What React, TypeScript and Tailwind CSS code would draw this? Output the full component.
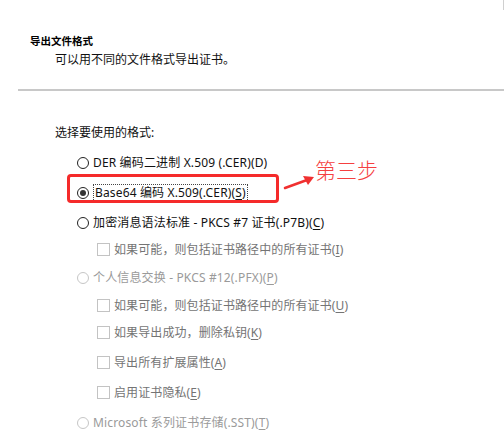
import type { ReactNode } from "react";

const font = { fontFamily: '"Noto Sans", "Noto Sans CJK SC", sans-serif' };

function Radio({ checked, disabled }: { checked?: boolean; disabled?: boolean }) {
  return (
    <span
      className={`grid h-[12px] w-[12px] shrink-0 place-items-center rounded-full border bg-white ${
        disabled ? "border-[#c6c6c6]" : "border-[#222222]"
      }`}
    >
      {checked && <span className="h-[6px] w-[6px] rounded-full bg-[#333333]" />}
    </span>
  );
}

function Key({ children }: { children: ReactNode }) {
  return <span className="underline underline-offset-2">{children}</span>;
}

function RadioRow({ h, checked, disabled, children }: { h: string; checked?: boolean; disabled?: boolean; children: ReactNode }) {
  return (
    <div className={`flex items-center gap-[4px] pl-[77px] tracking-[0.15px] ${h} ${disabled ? "text-[#9a9a9a]" : "text-[#111111]"}`}>
      <Radio checked={checked} disabled={disabled} />
      {children}
    </div>
  );
}

function CheckRow({ h, children }: { h: string; children: ReactNode }) {
  return (
    <div className={`flex items-center gap-[4px] pl-[97px] tracking-[0.1px] text-[#747474] ${h}`}>
      <span className="h-[13px] w-[13px] shrink-0 border border-[#c3c3c3] bg-white" />
      {children}
    </div>
  );
}

export default function App() {
  return (
    <main className="relative h-[446px] w-[504px] overflow-hidden bg-white text-[12px] leading-none" style={font}>
      <div className="absolute right-0 top-0 h-[10px] w-[1px] bg-[#d0d0d0]" />

      <section className="pt-[36px]">
        <h1 className="pl-[30px] text-[10.5px] font-bold text-black">导出文件格式</h1>
        <p className="mt-[7px] pl-[55px] text-[#111111]">可以用不同的文件格式导出证书。</p>
        <div className="ml-[18px] mt-[23px] h-[2px] bg-[#c8c8c8]" />
      </section>

      <section className="pt-[30px]">
        <div className="flex h-[24px] items-center pl-[55px] text-[#111111]">选择要使用的格式:</div>
        <div className="h-[3px]" />
        <RadioRow h="h-[30px]">
          <span>DER 编码二进制 X.509 (.CER)(D)</span>
        </RadioRow>
        <RadioRow h="h-[30px]" checked>
          <span className="border border-dotted border-[#444] px-[1px] py-[2px]">
            Base64 编码 X.509(.CER)(<Key>S</Key>)
          </span>
        </RadioRow>
        <RadioRow h="h-[30px]">
          <span>
            加密消息语法标准 - PKCS #7 证书(.P7B)(<Key>C</Key>)
          </span>
        </RadioRow>
        <CheckRow h="h-[24px]">
          <span>
            如果可能，则包括证书路径中的所有证书(<Key>I</Key>)
          </span>
        </CheckRow>
        <RadioRow h="h-[32px]" disabled>
          <span>
            个人信息交换 - PKCS #12(.PFX)(<Key>P</Key>)
          </span>
        </RadioRow>
        <CheckRow h="h-[24px]">
          <span>
            如果可能，则包括证书路径中的所有证书(<Key>U</Key>)
          </span>
        </CheckRow>
        <CheckRow h="h-[30px]">
          <span>
            如果导出成功，删除私钥(<Key>K</Key>)
          </span>
        </CheckRow>
        <CheckRow h="h-[30px]">
          <span>
            导出所有扩展属性(<Key>A</Key>)
          </span>
        </CheckRow>
        <CheckRow h="h-[30px]">
          <span>
            启用证书隐私(<Key>E</Key>)
          </span>
        </CheckRow>
        <RadioRow h="h-[30px]" disabled>
          <span>
            Microsoft 系列证书存储(.SST)(<Key>T</Key>)
          </span>
        </RadioRow>
      </section>

      {/* annotation: red box, arrow, label */}
      <div className="absolute left-[67px] top-[174px] h-[29px] w-[212px] rounded-[4px] border-[3px] border-[#f52a2a]" />
      <svg className="absolute left-[283px] top-[172px]" width="34" height="20" viewBox="0 0 34 20">
        <path d="M2 16 L24 8" stroke="#f03030" strokeWidth="2.5" strokeLinecap="round" />
        <path d="M31 5 L20 4 L25 13 Z" fill="#f03030" />
      </svg>
      <span className="absolute left-[315px] top-[160px] text-[21px] font-light text-[#f54040]">第三步</span>
    </main>
  );
}
